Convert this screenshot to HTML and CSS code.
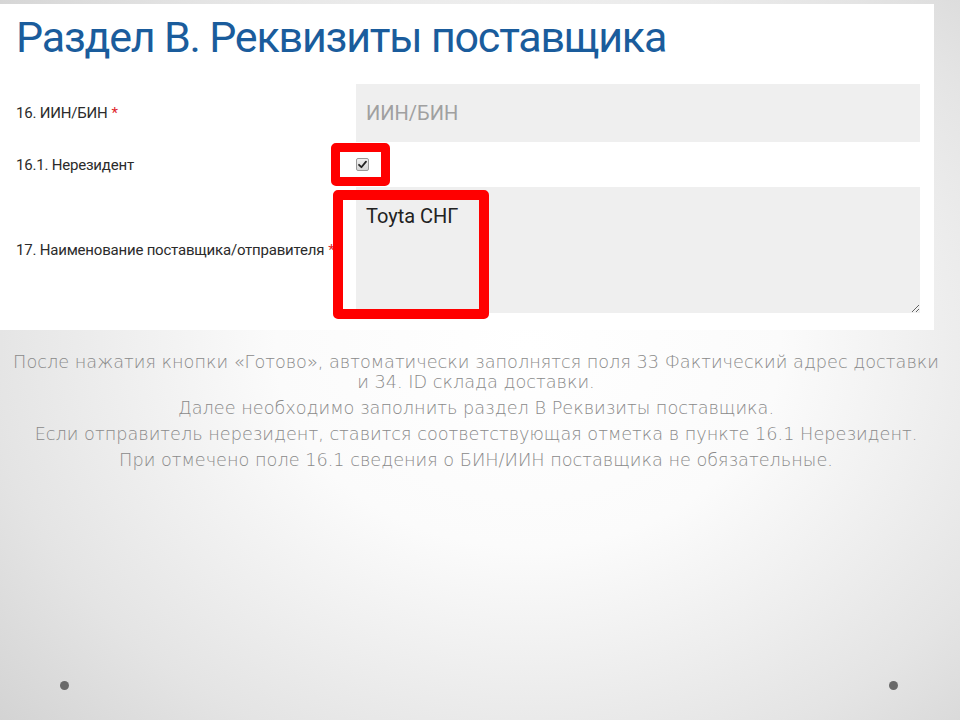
FILE: index.html
```html
<!DOCTYPE html>
<html lang="ru">
<head>
    <meta charset="UTF-8">
    <title>Раздел В. Реквизиты поставщика</title>
    <link rel="stylesheet" href="styles.css">
</head>
<body>
    <div class="slide">
        <div class="shot">
            <h1 class="shot-title">Раздел В. Реквизиты поставщика</h1>

            <div class="form">
                <div class="form-row row-iin">
                    <span class="form-label">16. ИИН/БИН <span class="req">*</span></span>
                    <div class="field">
                        <input class="text-input" type="text" placeholder="ИИН/БИН">
                    </div>
                </div>

                <div class="form-row row-check">
                    <span class="form-label">16.1. Нерезидент</span>
                    <div class="field">
                        <span class="checkbox">
                            <svg viewBox="0 0 13 13" width="13" height="13">
                                <path d="M3 6.8 L5.4 9.2 L10 3.6" fill="none" stroke="#222" stroke-width="1.8" stroke-linecap="round" stroke-linejoin="round"/>
                            </svg>
                        </span>
                        <span class="mark mark-check"></span>
                    </div>
                </div>

                <div class="form-row row-name">
                    <span class="form-label">17. Наименование поставщика/отправителя <span class="req">*</span></span>
                    <div class="field">
                        <textarea class="text-area" readonly>Toyta СНГ</textarea>
                        <span class="mark mark-name"></span>
                    </div>
                </div>
            </div>
        </div>

        <div class="notes">
            <p>После нажатия кнопки «Готово», автоматически заполнятся поля 33 Фактический адрес доставки и 34. ID склада доставки.</p>
            <p>Далее необходимо заполнить раздел В Реквизиты поставщика.</p>
            <p>Если отправитель нерезидент, ставится соответствующая отметка в пункте 16.1 Нерезидент.</p>
            <p>При отмечено поле 16.1 сведения о БИН/ИИН поставщика не обязательные.</p>
        </div>

        <div class="dots">
            <span class="dot"></span>
            <span class="dot"></span>
        </div>
    </div>
</body>
</html>
```

FILE: styles.css
```css
/* ===== BASE ===== */
* {
    margin: 0;
    padding: 0;
    box-sizing: border-box;
}

body {
    width: 960px;
    height: 720px;
    overflow: hidden;
    font-family: Roboto, 'Liberation Sans', sans-serif;
}

.slide {
    display: flex;
    flex-direction: column;
    width: 960px;
    height: 720px;
    background: radial-gradient(ellipse 75% 80% at 55% 48%, #ffffff 0%, #fbfbfb 35%, #e4e4e4 75%, #d2d2d2 100%);
}

/* ===== SCREENSHOT PANEL ===== */
.shot {
    width: 934px;
    height: 326px;
    margin-top: 4px;
    background: #fff;
    padding-right: 14px;
}

.shot-title {
    height: 54px;
    margin: 6px 0 20px;
    padding-left: 16px;
    font-size: 43px;
    line-height: 54px;
    font-weight: 400;
    letter-spacing: -1.2px;
    color: #1a5c9c;
}

.form {
    display: grid;
    grid-template-columns: 356px 564px;
    grid-template-rows: 58px 45px 126px;
}

.form-row {
    display: contents;
}

.form-label {
    display: flex;
    align-items: center;
    gap: 4px;
    padding-left: 16px;
    font-size: 15px;
    color: #2b2b2b;
    letter-spacing: -0.2px;
}

.req {
    color: #e0262b;
}

.field {
    position: relative;
    display: flex;
    align-items: center;
}

.text-input,
.text-area {
    width: 100%;
    height: 100%;
    border: none;
    outline: none;
    background: #efefef;
    font-family: Roboto, 'Liberation Sans', sans-serif;
    font-size: 20px;
    color: #222;
}

.text-input {
    padding: 0 10px;
}

.text-input::placeholder {
    color: #a0a0a0;
}

.text-area {
    padding: 17px 10px;
    line-height: 24px;
    resize: both;
}

.checkbox {
    display: block;
    width: 13px;
    height: 13px;
    border: 1px solid #9a9a9a;
    border-radius: 2px;
    background: linear-gradient(#f0f0f0, #d6d6d6);
}

.checkbox svg {
    display: block;
    margin: -1px;
}

/* ===== RED HIGHLIGHTS ===== */
.mark {
    position: absolute;
    border: 9px solid #ff0000;
    border-radius: 5px;
    pointer-events: none;
}

.mark-check {
    left: -25px;
    top: 1px;
    width: 59px;
    height: 43px;
}

.mark-name {
    left: -23px;
    top: 3px;
    width: 156px;
    height: 129px;
    border-width: 10px;
}

/* ===== NOTES ===== */
.notes {
    margin-top: 22px;
    padding: 0 19px 0 11px;
    text-align: center;
    font-family: 'DejaVu Sans', sans-serif;
    font-weight: 200;
    font-size: 17.7px;
    line-height: 20px;
    color: #8a8a8a;
}

.notes p + p {
    margin-top: 6px;
}

/* ===== DOTS ===== */
.dots {
    display: flex;
    justify-content: space-between;
    margin-top: auto;
    padding: 0 62px 30px 60px;
}

.dot {
    width: 9px;
    height: 9px;
    border-radius: 50%;
    background: #6a6a6a;
}
```
